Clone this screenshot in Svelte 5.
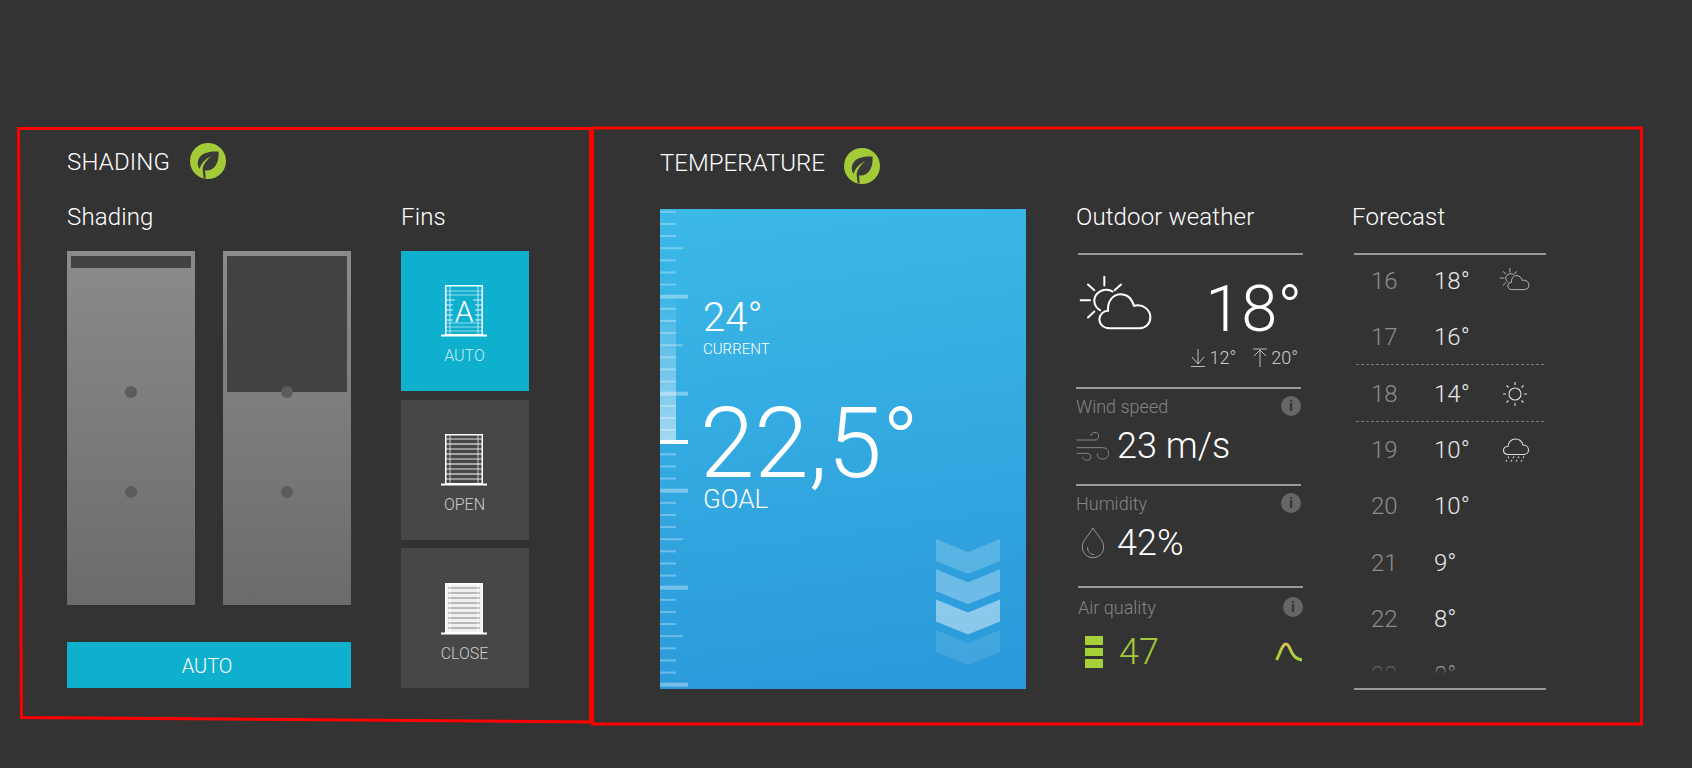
<script lang="ts">
	type Day = { day: number; temp: string; icon?: 'partly' | 'sun' | 'rain'; dashed?: boolean };

	const days: Day[] = [
		{ day: 16, temp: '18°', icon: 'partly' },
		{ day: 17, temp: '16°' },
		{ day: 18, temp: '14°', icon: 'sun', dashed: true },
		{ day: 19, temp: '10°', icon: 'rain' },
		{ day: 20, temp: '10°' },
		{ day: 21, temp: '9°' },
		{ day: 22, temp: '8°' },
		{ day: 23, temp: '8°' }
	];

	// gauge ticks: every 8th is long, every 4th is medium
	const ticks = Array.from({ length: 40 }, (_, i) => {
		const k = i + 1;
		const kind = k % 8 === 0 ? 'long' : k % 4 === 0 ? 'mid' : 'short';
		return { y: 199.7 + k * 12.125 - 209, kind };
	});
	const tickWidth: Record<string, number> = { short: 16, mid: 23, long: 28 };

	const slats = [5, 10, 15, 20, 25, 30, 35, 40, 45];
	const chevrons = [
		{ y: 0, o: 0.2 },
		{ y: 30.3, o: 0.3 },
		{ y: 60.6, o: 0.45 },
		{ y: 91, o: 0.1 }
	];
	const fins = [
		{ label: 'AUTO', kind: 'auto', active: true },
		{ label: 'OPEN', kind: 'open', active: false },
		{ label: 'CLOSE', kind: 'close', active: false }
	];
</script>

{#snippet leaf()}
	<svg class="leaf" viewBox="0 0 108 108" aria-hidden="true">
		<circle cx="54" cy="54" r="54" fill="#a3cb38" />
		<path
			d="M86 26C58 24 30 30 24 54C22 64 24 72 29 78C33 62 46 48 64 40C48 52 38 68 38 80L41 106L47 106L45 82C68 86 88 66 86 26Z"
			fill="#3a3a3a"
		/>
	</svg>
{/snippet}

{#snippet info()}
	<span class="info">i</span>
{/snippet}

{#snippet partly(w: number, h: number, sw: number)}
	<svg width={w} height={h} viewBox="54 250 225 170" fill="none" stroke="#fff" stroke-width={sw} stroke-linecap="round" aria-hidden="true">
		<path d="M133 258V284M62 328H90M84 281L103 298M183 281L164 298M84 380L103 362" />
		<path d="M158 302C146 294 126 294 112 308C98 322 100 346 120 358" />
		<path d="M148 412C128 412 118 398 118 386C118 372 130 360 144 360C142 330 160 310 182 310C202 310 215 322 222 345C250 338 271 358 271 380C271 400 256 412 240 412Z" />
	</svg>
{/snippet}

{#snippet finIcon(kind: string)}
	<svg class="fin-icon" class:low={kind === 'close'} width="46" height="52" viewBox="0 0 46 52" fill="none" aria-hidden="true">
		{#if kind === 'close'}
			<rect x="4.5" y="1" width="37" height="48" fill="#fff" opacity="0.92" />
			{#each slats as y}
				<line x1="7" x2="39" y1={y} y2={y} stroke="#666" stroke-width="0.8" />
			{/each}
		{:else if kind === 'open'}
			{#each slats as y, i}
				<line x1="5" x2="41" y1={y} y2={y} stroke="#fff" stroke-width={i % 2 ? 1.5 : 1} opacity={i % 2 ? 0.7 : 0.85} />
			{/each}
		{:else}
			<path d="M5 6H41M5 10H41M5 38H41M5 42H41M5 46H41" stroke="#fff" stroke-width="1" opacity="0.55" />
			<path d="M5 15H14M5 20H12M5 25H12M5 30H12M5 35H12M32 15H41M34 20H41M34 25H41M34 30H41M34 35H41" stroke="#fff" stroke-width="1" opacity="0.85" />
			<text x="23" y="37" text-anchor="middle" class="fin-letter">A</text>
		{/if}
		<path d="M9 1V49M37 1V49" stroke="#fff" stroke-width="1" opacity="0.7" />
		<rect x="4.75" y="0.75" width="36.5" height="49" stroke="#fff" stroke-width="1.5" />
		<rect x="0" y="49.5" width="46" height="2" fill="#fff" />
	</svg>
{/snippet}

<div class="page">
	<section class="shading">
		<header class="panel-head">
			<h2>SHADING</h2>
			{@render leaf()}
		</header>
		<div class="shading-body">
			<div class="shade-col">
				<h3>Shading</h3>
				<div class="shutters">
					<div class="shutter">
						<div class="blind" style="height: 12px"></div>
						<i class="dot dot-a"></i>
						<i class="dot dot-b"></i>
					</div>
					<div class="shutter">
						<div class="blind" style="height: 136px"></div>
						<i class="dot dot-a"></i>
						<i class="dot dot-b"></i>
					</div>
				</div>
				<button class="auto-btn">AUTO</button>
			</div>
			<div class="fins-col">
				<h3>Fins</h3>
				<div class="fins">
					{#each fins as fin}
						<button class="fin" class:active={fin.active}>
							{@render finIcon(fin.kind)}
							<span>{fin.label}</span>
						</button>
					{/each}
				</div>
			</div>
		</div>
	</section>

	<section class="temperature">
		<header class="panel-head">
			<h2>TEMPERATURE</h2>
			{@render leaf()}
		</header>
		<div class="temp-body">
			<div class="card">
				<svg class="gauge" width="28" height="480" viewBox="0 0 28 480" aria-hidden="true">
					<defs>
						<linearGradient id="gauge-fill" x1="0" y1="0" x2="0" y2="1">
							<stop offset="0" stop-color="#fff" stop-opacity="0.03" />
							<stop offset="1" stop-color="#fff" stop-opacity="0.55" />
						</linearGradient>
					</defs>
					<rect x="0" y="88" width="16" height="145" fill="url(#gauge-fill)" />
					{#each ticks as t}
						<rect
							x="0"
							y={t.y - (t.kind === 'long' ? 2 : 1)}
							width={tickWidth[t.kind]}
							height={t.kind === 'long' ? 4 : 2}
							fill="#fff"
							opacity={t.kind === 'long' ? 0.35 : 0.3}
						/>
					{/each}
					<rect x="0" y="231" width="28" height="4" fill="#fff" />
				</svg>
				<div class="readings">
					<div class="current">24°</div>
					<div class="current-label">CURRENT</div>
					<div class="goal">22,5°</div>
					<div class="goal-label">GOAL</div>
				</div>
				<svg class="chevrons" width="64" height="126" viewBox="0 0 64 126" aria-hidden="true">
					{#each chevrons as c}
						<path d="M0 {c.y}L32 {c.y + 13}L64 {c.y}V{c.y + 22}L32 {c.y + 35}L0 {c.y + 22}Z" fill="#fff" opacity={c.o} />
					{/each}
				</svg>
			</div>

			<div class="weather">
				<h3>Outdoor weather</h3>
				<div class="now rule shifted">
					<div class="now-top">
						{@render partly(75, 57, 6)}
						<div class="now-temp">18°</div>
					</div>
					<div class="minmax">
						<svg width="16" height="20" viewBox="0 0 16 20" fill="none" stroke="#ccc" stroke-width="0.9" aria-hidden="true">
							<path d="M8 1V16M2 9L8 16L14 9M1 18.5H15" />
						</svg>
						<span class="mm-val">12°</span>
						<svg class="up" width="16" height="20" viewBox="0 0 16 20" fill="none" stroke="#ccc" stroke-width="0.9" aria-hidden="true">
							<path d="M1 1H15M8 2V19M2 8L8 2L14 8" />
						</svg>
						<span class="mm-val">20°</span>
					</div>
				</div>
				<div class="stat rule wind">
					<div class="stat-head"><span>Wind speed</span>{@render info()}</div>
					<div class="stat-value">
						<svg class="stat-icon" width="34" height="30" viewBox="46 718 102 90" fill="none" stroke="#888" stroke-width="3" aria-hidden="true">
							<path d="M48 745H103C118 745 118 722 103 722C95 722 90 728 92 733" />
							<path d="M48 768H125C150 768 150 802 125 802C112 802 106 790 112 785" />
							<path d="M48 785H78C95 785 95 806 78 806C70 806 64 800 66 795" />
						</svg>
						<span>23 m/s</span>
					</div>
				</div>
				<div class="stat rule humid">
					<div class="stat-head"><span>Humidity</span>{@render info()}</div>
					<div class="stat-value">
						<svg class="stat-icon drop" width="24" height="32" viewBox="60 165 72 96" fill="none" stroke="#999" stroke-width="3" aria-hidden="true">
							<path d="M96 168C80 195 64 205 64 225C64 245 80 257 96 257C112 257 128 245 128 225C128 205 112 195 96 168Z" />
							<path d="M80 225C78 240 90 248 100 248" />
						</svg>
						<span>42%</span>
					</div>
				</div>
				<div class="stat rule shifted air">
					<div class="stat-head"><span>Air quality</span>{@render info()}</div>
					<div class="stat-value green">
						<div class="bars"><b></b><b></b><b></b></div>
						<span>47</span>
						<svg class="spark" width="28" height="21" viewBox="0 0 28 21" fill="none" aria-hidden="true">
							<defs>
								<linearGradient id="spark-line" x1="0" y1="0" x2="0" y2="1">
									<stop offset="0" stop-color="#e0bb5a" />
									<stop offset="0.5" stop-color="#a8cf3c" />
								</linearGradient>
							</defs>
							<path d="M1.5 18C5 12 7 2 11 2C16 2 15 17 27 18" stroke="url(#spark-line)" stroke-width="3" />
						</svg>
					</div>
				</div>
			</div>

			<div class="forecast">
				<h3>Forecast</h3>
				<div class="days">
					{#each days as d}
						<div class="day" class:dashed={d.dashed}>
							<span class="day-num">{d.day}</span>
							<span class="day-temp">{d.temp}</span>
							{#if d.icon === 'partly'}
								<span class="day-icon raised">{@render partly(31, 24, 4.5)}</span>
							{:else if d.icon === 'sun'}
								<span class="day-icon nudged">
									<svg width="26" height="26" viewBox="-13 -13 26 26" fill="none" stroke="#ddd" stroke-width="1.1" aria-hidden="true">
										<circle r="6" />
										<path d="M0-12V-9M0 9V12M-12 0H-9M9 0H12M-8.5-8.5L-6.5-6.5M6.5 6.5L8.5 8.5M8.5-8.5L6.5-6.5M-6.5 6.5L-8.5 8.5" />
									</svg>
								</span>
							{:else if d.icon === 'rain'}
								<span class="day-icon nudged">
									<svg width="28" height="25" viewBox="0 0 28 25" fill="none" stroke="#ddd" stroke-width="1.1" aria-hidden="true">
										<path d="M6 16.5C3 16.5 1.5 14.5 1.5 12.5C1.5 10 3.5 8.5 6 8.5C6 4 9.5 1 13.5 1C17.5 1 20 3.5 21 7C24.5 7 26.5 9.5 26.5 12C26.5 14.5 24.5 16.5 22 16.5Z" />
										<path d="M7 18.5L6 20M12 18.5L11 20M17 18.5L16 20M22 18.5L21 20M5 22L4 23.5M10 22L9 23.5M15 22L14 23.5M20 22L19 23.5" />
									</svg>
								</span>
							{/if}
						</div>
					{/each}
				</div>
			</div>
		</div>
	</section>

	<!-- red annotation boxes drawn over the screenshot -->
	<svg class="marks" width="1692" height="768" viewBox="0 0 1692 768" fill="none" stroke="#f00" stroke-width="3" aria-hidden="true">
		<path d="M18.5 128.5H590.5V722L21.5 717.5Z" />
		<path d="M592.5 128H1641.5V724H592.5Z" />
	</svg>
</div>

<style>
	:global(body) {
		background: #333;
	}

	.page {
		position: relative;
		display: flex;
		height: 768px;
		overflow: hidden;
		font-family: Roboto, 'Liberation Sans', sans-serif;
		font-weight: 300;
		color: #fff;
		background: #333;
	}

	.marks {
		position: absolute;
		left: 0;
		top: 0;
		pointer-events: none;
	}

	h2,
	h3 {
		margin: 0;
	}

	.shading {
		width: 523px;
		padding: 143px 0 0 67px;
	}

	.temperature {
		padding: 148px 0 0 70px;
	}

	.panel-head {
		display: flex;
		height: 36px;
		align-items: center;
		gap: 20px;
	}

	.temperature .panel-head {
		gap: 19px;
	}

	.panel-head h2 {
		font-size: 24px;
		font-weight: 300;
		line-height: 36px;
		margin-top: 2px;
		letter-spacing: 0.15px;
	}

	.temperature .panel-head h2 {
		margin-top: -6px;
		letter-spacing: 0;
	}

	.leaf {
		width: 36px;
		height: 36px;
		flex: none;
	}

	h3 {
		font-size: 24px;
		line-height: 28px;
		font-weight: 300;
		letter-spacing: 0.15px;
	}

	.shading-body {
		display: flex;
		gap: 50px;
		margin-top: 24px;
	}

	.shade-col {
		width: 284px;
	}

	.fins-col {
		width: 128px;
	}

	.shutters {
		display: flex;
		gap: 28px;
		margin-top: 20px;
	}

	.shutter {
		position: relative;
		width: 128px;
		height: 354px;
		background: linear-gradient(#8b8b8b, #6b6b6b);
	}

	.blind {
		position: absolute;
		left: 4px;
		right: 4px;
		top: 5px;
		background: #424242;
	}

	.dot {
		position: absolute;
		left: 58px;
		width: 12px;
		height: 12px;
		border-radius: 50%;
		background: #5c5c5c;
	}

	.dot-a {
		top: 135px;
	}

	.dot-b {
		top: 235px;
	}

	button {
		border: 0;
		padding: 0;
		font: inherit;
		color: inherit;
	}

	.auto-btn {
		display: block;
		width: 100%;
		height: 46px;
		margin-top: 37px;
		padding: 2px 4px 0 0;
		background: #0eb0ce;
		font-size: 20px;
	}

	.fins {
		display: flex;
		flex-direction: column;
		justify-content: space-between;
		height: 437px;
		margin-top: 20px;
	}

	.fin {
		display: flex;
		flex-direction: column;
		align-items: center;
		height: 140px;
		padding-top: 34px;
		background: #474747;
		color: #ccc;
		font-size: 16px;
	}

	.fin.active {
		background: #0eb0ce;
		color: #c5edf5;
	}

	.fin span {
		margin-top: 9px;
		margin-left: -1px;
		line-height: 20px;
	}

	.fin-icon {
		margin-left: -2px;
	}

	.fin-icon.low {
		margin-top: 1px;
	}

	.fin-letter {
		font-family: Roboto, sans-serif;
		font-weight: 300;
		font-size: 30px;
		fill: #fff;
	}

	.temp-body {
		display: flex;
		gap: 50px;
		margin-top: 25px;
	}

	.card {
		position: relative;
		width: 366px;
		height: 480px;
		background: linear-gradient(172deg, #3bb9e7, #2b98da);
	}

	.gauge {
		position: absolute;
		left: 0;
		top: 0;
	}

	.chevrons {
		position: absolute;
		left: 276px;
		top: 330px;
	}

	.readings {
		padding: 87px 0 0 43px;
	}

	.current {
		font-size: 40px;
		line-height: 44px;
	}

	.current-label {
		font-size: 15px;
		line-height: 18px;
	}

	.goal {
		margin: 43.5px 0 0 -3px;
		font-size: 98px;
		line-height: 84px;
	}

	.goal-label {
		font-size: 26px;
		line-height: 24px;
		margin-top: 1px;
	}

	.weather {
		width: 227px;
	}

	.weather h3,
	.forecast h3 {
		height: 50px;
		margin-top: -6px;
	}

	.forecast h3 {
		margin-left: -1px;
	}

	.rule {
		border-top: 2px solid #999;
	}

	.shifted {
		margin-left: 2px;
	}

	.now {
		height: 132px;
		width: 225px;
		margin-right: -2px;
	}

	.now-top {
		display: flex;
		justify-content: space-between;
		padding-top: 19px;
		padding-right: 1px;
	}

	.now-temp {
		font-size: 65px;
		line-height: 64px;
		margin-top: 3px;
	}

	.minmax {
		display: flex;
		align-items: center;
		justify-content: flex-end;
		gap: 3px;
		margin-top: 6px;
		padding-right: 5px;
		font-size: 18px;
		color: #ccc;
	}

	.minmax .up {
		margin-left: 13px;
	}

	.stat {
		width: 225px;
	}

	.wind {
		height: 95px;
	}

	.humid {
		height: 100px;
	}

	.stat-head {
		display: flex;
		align-items: center;
		justify-content: space-between;
		font-size: 18px;
		color: #858585;
		height: 26px;
		margin-top: 4px;
	}

	.air .stat-head {
		margin-top: 6px;
	}

	.info {
		display: flex;
		align-items: center;
		justify-content: center;
		width: 20px;
		height: 20px;
		border-radius: 50%;
		background: #666;
		color: #333;
		font-size: 15px;
		font-weight: 700;
	}

	.stat-value {
		display: flex;
		align-items: center;
		font-size: 36px;
		line-height: 40px;
		margin-top: 7px;
	}

	.stat-icon {
		width: 34px;
		margin-right: 7px;
		flex: none;
	}

	.stat-icon.drop {
		width: 24px;
		margin: 0 12px 0 5px;
	}

	.air .stat-value {
		margin-top: 12px;
	}

	.green {
		color: #a3c93a;
	}

	.bars {
		display: flex;
		flex-direction: column;
		gap: 3px;
		width: 18px;
		margin: 0 16px 0 7px;
	}

	.bars b {
		height: 8.5px;
		background: #a6d038;
	}

	.spark {
		margin-left: auto;
	}

	.forecast {
		width: 193px;
	}

	.days {
		position: relative;
		height: 433px;
		margin-left: 1px;
		border-top: 2px solid #999;
		border-bottom: 2px solid #999;
		overflow: hidden;
	}

	.day {
		position: relative;
		display: flex;
		align-items: center;
		height: 56.3px;
		font-size: 24px;
	}

	.day:first-child {
		margin-top: -2px;
	}

	.day-num {
		width: 63px;
		margin-left: 17px;
		color: #8c8c8c;
	}

	.day-temp {
		width: 65px;
		color: #e8e8e8;
	}

	.day-icon {
		display: flex;
	}

	.day-icon.raised {
		margin-top: -4px;
	}

	.day-icon.nudged {
		margin-left: 3px;
	}

	.dashed::before,
	.dashed::after {
		content: '';
		position: absolute;
		left: 2px;
		right: 2px;
		border-top: 1px dashed #7d7d7d;
	}

	.dashed::before {
		top: -2px;
	}

	.dashed::after {
		bottom: 0;
	}

	.day:last-child {
		-webkit-mask-image: linear-gradient(#000 25%, transparent 48%);
		mask-image: linear-gradient(#000 25%, transparent 48%);
	}
</style>
